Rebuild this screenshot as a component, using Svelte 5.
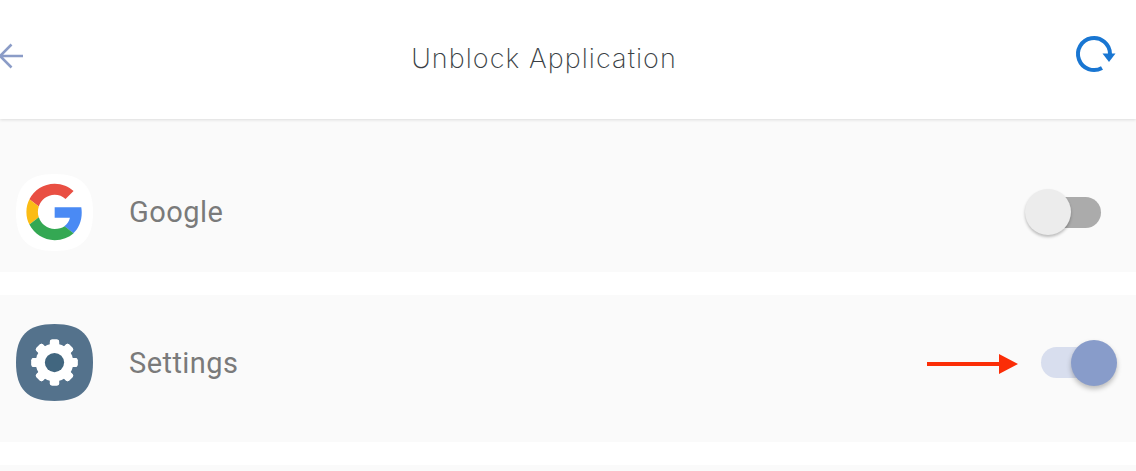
<script>
  // Lista de aplicativos
  const apps = [
    { name: 'Google', icon: 'google', on: false },
    { name: 'Settings', icon: 'settings', on: true }
  ];
  const teeth = [0, 45, 90, 135, 180, 225, 270, 315];
</script>

<div class="page">
  <header class="topbar">
    <svg class="back" width="24" height="28" viewBox="0 0 24 28">
      <path d="M23 14H1M11.500 2.500L0 14l11.500 11.500" fill="none" stroke="#8b9cc7" stroke-width="2.600" />
    </svg>
    <h1>Unblock Application</h1>
    <svg class="refresh" width="56" height="44" viewBox="0 0 56 44">
      <path d="M38 36.900A16 16 0 1 1 46 23" fill="none" stroke="#1976d2" stroke-width="4" />
      <path d="M38.500 22.500H51.500L45 31z" fill="#1976d2" />
    </svg>
  </header>

  <main class="list">
    {#each apps as app, i}
      <section class="row" class:first={i === 0}>
        {#if app.icon === 'google'}
          <svg class="app-icon" viewBox="0 0 100 100">
            <path d="M50 0C85 0 100 15 100 50S85 100 50 100 0 85 0 50 15 0 50 0z" fill="#fff" />
            <g transform="translate(13.500 12.500) scale(1.530)">
              <path fill="#e94f43" d="M24 9.500c3.540 0 6.710 1.220 9.210 3.600l6.850-6.850C35.900 2.380 30.470 0 24 0 14.620 0 6.510 5.380 2.560 13.220l7.980 6.190C12.430 13.720 17.740 9.500 24 9.500z" />
              <path fill="#4a8af4" d="M46.980 24.550c0-1.570-.15-3.090-.38-4.550H24v9.020h12.940c-.58 2.960-2.260 5.480-4.780 7.180l7.730 6c4.510-4.180 7.090-10.360 7.090-17.650z" />
              <path fill="#fbbc15" d="M10.530 28.590c-.5-1.450-.78-2.990-.78-4.590s.27-3.140.78-4.590l-7.980-6.190C.92 16.460 0 20.120 0 24c0 3.880.92 7.540 2.560 10.780l7.970-6.190z" />
              <path fill="#34a853" d="M24 48c6.480 0 11.930-2.130 16.060-5.810l-7.730-6c-2.150 1.450-4.920 2.300-8.330 2.300-6.260 0-11.570-4.220-13.470-9.910l-7.980 6.190C6.510 42.620 14.620 48 24 48z" />
            </g>
          </svg>
        {:else}
          <svg class="app-icon" viewBox="0 0 100 100">
            <path d="M50 0C85 0 100 15 100 50S85 100 50 100 0 85 0 50 15 0 50 0z" fill="#54728c" />
            {#each teeth as deg}
              <rect x="44" y="20" width="12" height="60" rx="3" fill="#fff" transform="rotate({deg} 50 50)" />
            {/each}
            <circle cx="50" cy="50" r="24.500" fill="#fff" />
            <circle cx="50" cy="50" r="12.500" fill="#41667f" />
          </svg>
        {/if}
        <span class="name">{app.name}</span>
        {#if app.on}
          <svg class="pointer" width="91" height="20" viewBox="0 0 91 20">
            <path d="M0 8h72V0l19 10-19 10v-8H0z" fill="#fb2d07" />
          </svg>
        {/if}
        <div class="switch" class:on={app.on}>
          <span class="knob"></span>
        </div>
      </section>
    {/each}
    <section class="row rest"></section>
  </main>
</div>

<style>
  :global(body) {
    margin: 0;
    background: #fff;
  }

  .page {
    height: 471px;
    overflow: hidden;
    font-family: Roboto, sans-serif;
  }

  .topbar {
    height: 119px;
    box-sizing: border-box;
    display: flex;
    justify-content: space-between;
    align-items: center;
    padding: 0 16px 2px 0;
    background: #fff;
    box-shadow: 0 1px 3px rgba(0, 0, 0, 0.12);
    position: relative;
  }

  .back {
    margin-top: -6px;
  }

  .refresh {
    margin-top: -12px;
  }

  h1 {
    margin: 0;
    font-family: Inter, sans-serif;
    font-size: 27px;
    font-weight: 200;
    letter-spacing: 1.05px;
    color: #3a3f45;
  }

  .list {
    display: flex;
    flex-direction: column;
    gap: 23px;
  }

  .row {
    display: flex;
    align-items: center;
    height: 147px;
    box-sizing: border-box;
    padding: 0 18px 12px 16px;
    background: #fafafa;
  }

  .row.first {
    height: 153px;
    padding-top: 33px;
    padding-bottom: 0;
  }

  .row.rest {
    height: 30px;
  }

  .app-icon {
    width: 77px;
    height: 77px;
    flex: none;
  }

  .name {
    margin-left: 36px;
    margin-right: auto;
    font-size: 29px;
    letter-spacing: 0.45px;
    color: #7a7a7a;
  }

  .pointer {
    margin-right: 23px;
    margin-top: 2px;
  }

  .switch {
    position: relative;
    width: 54px;
    height: 31px;
    margin-right: 17px;
    border-radius: 16px;
    background: #ababab;
  }

  .knob {
    position: absolute;
    top: -7.500px;
    left: -22px;
    width: 46px;
    height: 46px;
    border-radius: 50%;
    background: #ececec;
    box-shadow: 0 2px 3px rgba(0, 0, 0, 0.25);
  }

  .switch.on {
    width: 54px;
    margin-right: 23px;
    background: #d8deee;
  }

  .switch.on .knob {
    left: 30px;
    background: #889cca;
    box-shadow: 0 3px 5px rgba(0, 0, 0, 0.25);
  }
</style>
